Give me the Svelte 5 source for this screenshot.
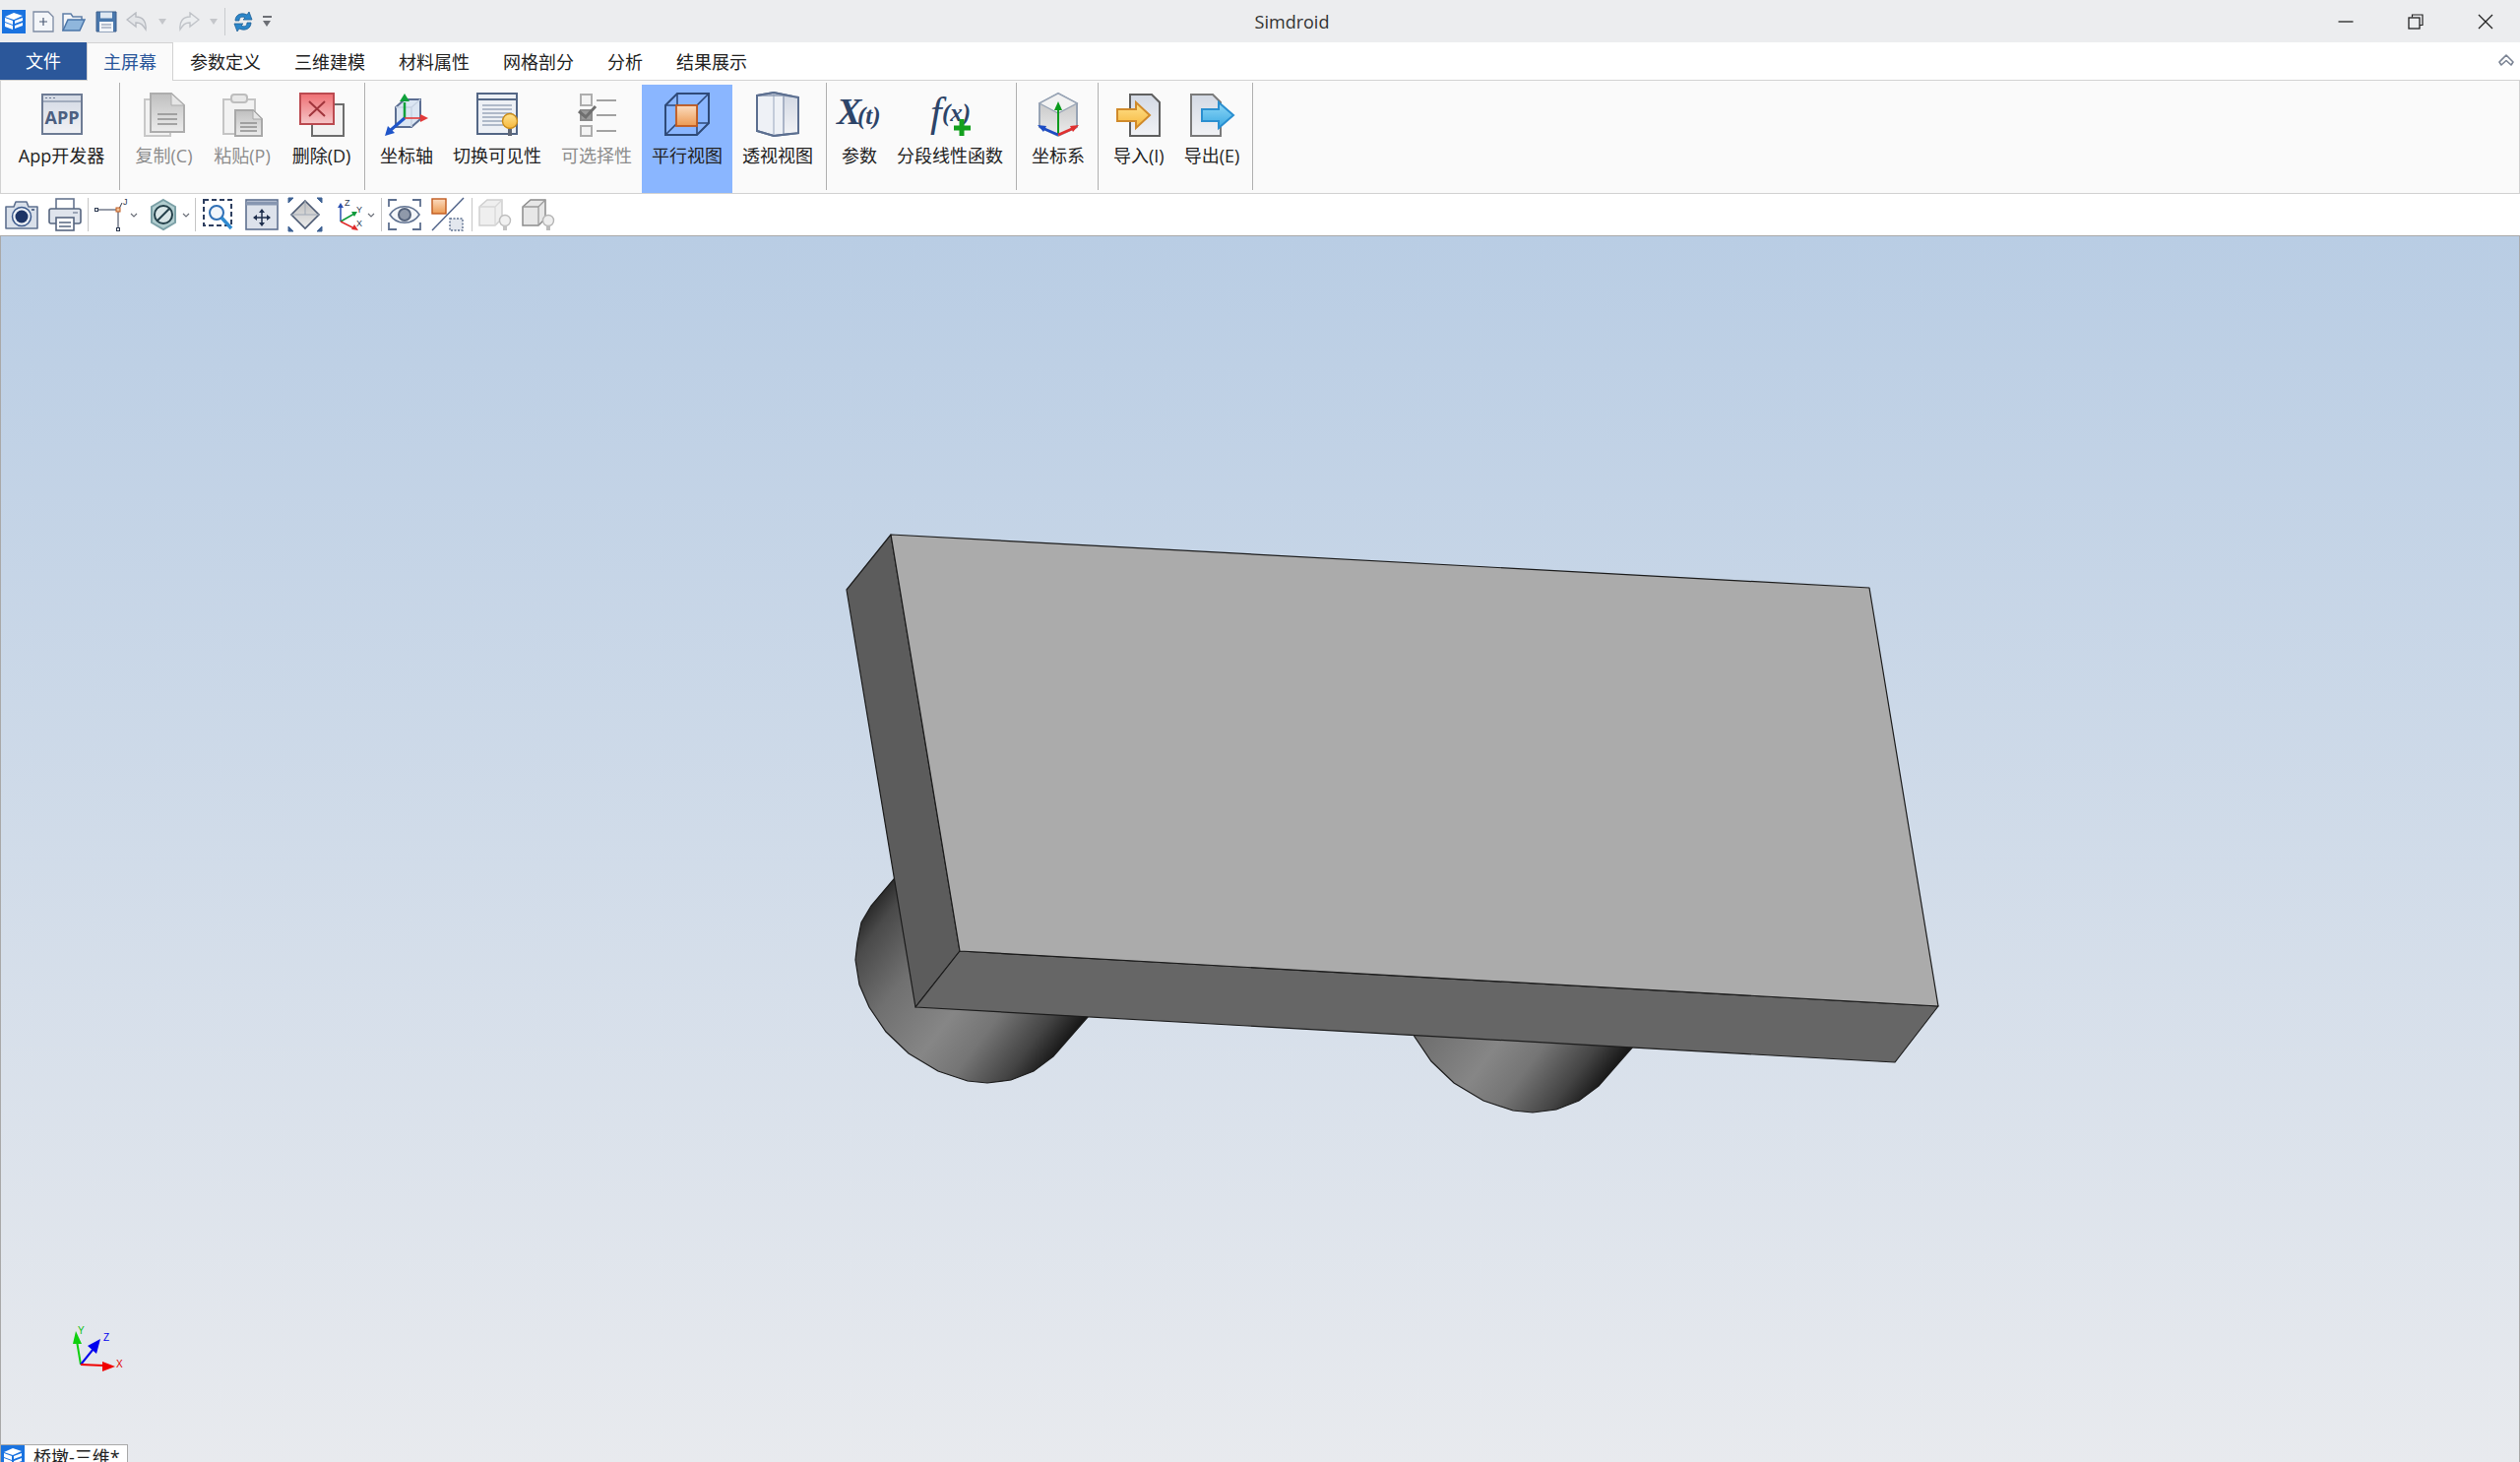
<script>
	const tabs = ['参数定义', '三维建模', '材料属性', '网格剖分', '分析', '结果展示'];

	const groups = [
		[{ label: 'App开发器', icon: 'app', w: 111 }],
		[
			{ label: '复制(C)', icon: 'copy', disabled: true, w: 79 },
			{ label: '粘贴(P)', icon: 'paste', disabled: true, w: 80 },
			{ label: '删除(D)', icon: 'delete', w: 81 }
		],
		[
			{ label: '坐标轴', icon: 'axes' },
			{ label: '切换可见性', icon: 'visible' },
			{ label: '可选择性', icon: 'select', disabled: true },
			{ label: '平行视图', icon: 'parallel', active: true },
			{ label: '透视视图', icon: 'perspective' }
		],
		[
			{ label: '参数', icon: 'param' },
			{ label: '分段线性函数', icon: 'func' }
		],
		[{ label: '坐标系', icon: 'csys' }],
		[
			{ label: '导入(I)', icon: 'import' },
			{ label: '导出(E)', icon: 'export' }
		]
	];

	const tools = [
		['camera', 'printer'],
		['edge+', 'hex+'],
		['zoombox', 'pan', 'fit', 'triad+'],
		['eye', 'slash'],
		['cubeLight', 'cubeDark']
	];

	const roundOutline =
		'M908 893 L885 920 L875 937 L871 957 L869 975 L873 1000 L883 1023 L900 1048 L923 1070 L953 1088 L983 1098 L1003 1100 L1027 1097 L1050 1088 L1070 1073 L1105 1033 Z';
</script>

{#snippet logo()}
	<rect width="24" height="24" fill="#1a73e0" />
	<path d="M3 7 L12 3 L21 6 L12 10Z M3 12 L11 15 V11 L3 8Z M13 11 L21 8 V11 L13 14Z M3 17 L11 20 V16 L3 13Z M13 16 L21 13 V16 L13 19Z" fill="#fff" />
{/snippet}

{#snippet ribbonIcon(name)}
	<svg class="ribbon-icon" viewBox="0 0 48 48" width="48" height="48">
		{#if name === 'app'}
			<rect x="4" y="4" width="40" height="40" fill="url(#gPanel)" stroke="#6d7b94" stroke-width="2" />
			<path d="M4 11 H44" stroke="#6d7b94" />
			<path d="M7 7.5 H9 M11 7.5 H13 M15 7.5 H17" stroke="#6d7b94" />
			<text x="24" y="34" text-anchor="middle" class="app-text">APP</text>
		{:else if name === 'copy'}
			<path d="M4 9 H30 V46 H4Z" fill="#f2f2f2" stroke="#c8c8c8" stroke-width="2" />
			<path d="M10 3 H31 L44 15 V42 H10Z" fill="url(#gGray)" stroke="#adadad" stroke-width="2" />
			<path d="M31 3 V15 H44Z" fill="#e6e6e6" stroke="#adadad" />
			<path d="M17 24 H37 M17 29 H37 M17 34 H37" stroke="#8f8f8f" stroke-width="1.6" />
		{:else if name === 'paste'}
			<path d="M5 9 H37 V44 H5Z" fill="#f2f2f2" stroke="#c4c4c4" stroke-width="2" />
			<rect x="13" y="4" width="16" height="8" rx="3" fill="#e8e8e8" stroke="#bdbdbd" stroke-width="2" />
			<path d="M17 20 H35 L44 29 V46 H17Z" fill="url(#gGray)" stroke="#a8a8a8" stroke-width="2" />
			<path d="M35 20 V29 H44Z" fill="#e6e6e6" stroke="#a8a8a8" />
			<path d="M22 33 H39 M22 37 H39 M22 41 H39" stroke="#8f8f8f" stroke-width="1.5" />
		{:else if name === 'delete'}
			<rect x="14" y="14" width="32" height="32" fill="#f2f2f2" stroke="#6d6d6d" stroke-width="2" />
			<rect x="2" y="3" width="34" height="31" fill="url(#gRed)" stroke="#bb4a50" stroke-width="2" />
			<path d="M11 11 L27 26 M27 11 L11 26" stroke="#a0353c" stroke-width="2" />
		{:else if name === 'axes'}
			<path d="M13 17 L22 9 H38 V29 L29 37 H13Z" fill="#dbe6f3" stroke="#5b6e92" stroke-width="2" />
			<path d="M13 17 H29 V37 M29 17 L38 9" fill="none" stroke="#c6d2e2" stroke-width="1.4" />
			<path d="M22 28 V12" stroke="#0fa13b" stroke-width="2.5" />
			<path d="M22 3 L27 11 H17Z" fill="#0fa13b" />
			<path d="M22 28 H38" stroke="#e33a3a" stroke-width="1.6" />
			<path d="M46 28 L38 24 V32Z" fill="#e33a3a" />
			<path d="M22 28 L8 40" stroke="#1f55c9" stroke-width="3" />
			<path d="M2 46 L5 36 L12 43Z" fill="#1f55c9" />
		{:else if name === 'visible'}
			<rect x="4" y="3" width="40" height="41" fill="#edf0f5" stroke="#536685" stroke-width="2" />
			<path d="M4 9 H44" stroke="#536685" stroke-width="2" />
			<path d="M9 15 H39 M9 19 H39 M9 23 H39 M9 27 H34 M9 31 H32 M9 35 H32" stroke="#9aa6ba" stroke-width="1.5" />
			<circle cx="37" cy="31" r="7.5" fill="url(#gBulb)" stroke="#c98b19" stroke-width="1.4" />
			<path d="M35 39 H39 V46 H35Z" fill="#5f6675" />
		{:else if name === 'select'}
			<rect x="8" y="4" width="11" height="11" fill="#f4f4f4" stroke="#adadad" stroke-width="2" />
			<rect x="8" y="20" width="11" height="10" fill="#9a9a9a" stroke="#8a8a8a" stroke-width="2" />
			<path d="M6 21 L13 27 L23 16" fill="none" stroke="#6f6f6f" stroke-width="3" />
			<rect x="8" y="36" width="11" height="10" fill="#f4f4f4" stroke="#adadad" stroke-width="2" />
			<path d="M24 10 H44 M24 25 H44 M24 41 H44" stroke="#a2a2a2" stroke-width="2" />
		{:else if name === 'parallel'}
			<path d="M2 15 L14 3 H46 V33 L34 45 H2Z" fill="none" stroke="#2f4a78" stroke-width="2" />
			<path d="M2 15 H34 V45 M34 15 L46 3 M14 3 V33 H46 M14 33 L2 45" fill="none" stroke="#2f4a78" stroke-width="1.6" />
			<rect x="13" y="15" width="21" height="21" fill="url(#gOrange)" stroke="#c05a1f" stroke-width="1.8" />
		{:else if name === 'perspective'}
			<path d="M3 5 L20 2 L45 7 V43 L20 46 L3 41Z" fill="#eef1f6" stroke="#5c6f90" stroke-width="2" />
			<path d="M20 2 V46" stroke="#b4bfd0" stroke-width="1.5" />
			<path d="M30 5 H45 V43 H30Z" fill="url(#gPanel)" />
			<path d="M3 5 H30 V44 M30 5 L45 7" fill="none" stroke="#8f9cb4" stroke-width="1.4" />
			<path d="M3 5 L20 2 L45 7 V43 L20 46 L3 41Z" fill="none" stroke="#5c6f90" stroke-width="2" />
		{:else if name === 'param'}
			<text x="1" y="34" class="math math-big">X</text>
			<text x="22" y="34" class="math math-small">(t)</text>
		{:else if name === 'func'}
			<text x="4" y="36" class="math math-f">f</text>
			<text x="16" y="31" class="math math-small">(x)</text>
			<path d="M36 29 V46 M28 38 H45" stroke="#13a01e" stroke-width="5" />
		{:else if name === 'csys'}
			<path d="M24 3 L43 13 V37 L24 46 L5 37 V13Z" fill="url(#gGray)" stroke="#97a3b4" stroke-width="2" />
			<path d="M5 13 L24 23 L43 13 L24 3Z" fill="#f2f2f2" stroke="#97a3b4" stroke-width="1.4" />
			<path d="M24 44 V17" stroke="#0a9a1c" stroke-width="2" />
			<path d="M24 11 L28 20 H20Z" fill="#0a9a1c" />
			<path d="M24 45 L8 38" stroke="#1d4cc4" stroke-width="2.5" />
			<path d="M3 35 L12 36 L9 42Z" fill="#1d4cc4" />
			<path d="M24 45 L40 38" stroke="#e03030" stroke-width="2.5" />
			<path d="M45 35 L36 36 L39 42Z" fill="#e03030" />
		{:else if name === 'import'}
			<path d="M15 4 H37 L45 12 V46 H15Z" fill="url(#gPanel)" stroke="#5f5f5f" stroke-width="2" />
			<path d="M2 19 H21 V12 L35 25 L21 38 V31 H2Z" fill="url(#gBulb)" stroke="#d08a2a" stroke-width="2" />
		{:else if name === 'export'}
			<path d="M3 4 H25 L33 12 V46 H3Z" fill="url(#gPanel)" stroke="#7a7a7a" stroke-width="2" />
			<path d="M14 19 H31 V12 L46 25 L31 38 V31 H14Z" fill="url(#gBlue)" stroke="#2a8fd0" stroke-width="2" />
		{/if}
	</svg>
{/snippet}

{#snippet toolIcon(name)}
	<svg class="tool-icon" viewBox="0 0 34 34" width="34" height="34">
		{#if name === 'camera'}
			<path d="M1 9 H9 L11 4 H22 L24 9 H33 V31 H1Z" fill="#d9e0ea" stroke="#5f7190" stroke-width="1.6" stroke-linejoin="round" />
			<circle cx="17" cy="19" r="9.5" fill="#eef2f7" stroke="#3c5a8c" stroke-width="1.5" />
			<circle cx="17" cy="19" r="6.5" fill="#1e3566" />
			<rect x="27" y="11" width="3" height="2" fill="#5f7190" />
		{:else if name === 'printer'}
			<rect x="8" y="1" width="18" height="11" fill="#fff" stroke="#66758f" stroke-width="1.6" />
			<rect x="1" y="11" width="32" height="15" rx="2" fill="#dfe4ec" stroke="#56657f" stroke-width="1.6" />
			<rect x="8" y="20" width="18" height="13" fill="#fff" stroke="#56657f" stroke-width="1.6" />
			<path d="M11 25 H23 M11 29 H23" stroke="#56657f" stroke-width="1.6" />
			<path d="M25 15 H30" stroke="#56657f" />
		{:else if name === 'edge'}
			<path d="M3 12 H24 M24 14 V31 M25 11 L28 5" stroke="#2c3950" stroke-width="1" fill="none" />
			<rect x="0.5" y="10.5" width="3" height="3" fill="#fff" stroke="#2c3950" />
			<rect x="22" y="10" width="4" height="4" fill="#f2c49a" stroke="#c05a1f" />
			<rect x="22.5" y="30.5" width="3" height="3" fill="#fff" stroke="#2c3950" />
			<text x="29" y="7" class="tiny">J</text>
		{:else if name === 'hex'}
			<path d="M17 2 L29 9 V25 L17 32 L5 25 V9Z" fill="#b2ced0" stroke="#7ba0a6" stroke-width="2" />
			<circle cx="17" cy="17" r="9" fill="#d9e6e7" stroke="#24404a" stroke-width="2" />
			<path d="M11 23 L23 11" stroke="#24404a" stroke-width="2" />
		{:else if name === 'zoombox'}
			<rect x="2" y="2" width="28" height="26" fill="none" stroke="#2e3f60" stroke-width="2" stroke-dasharray="5 3" />
			<circle cx="15" cy="15" r="7" fill="#f1f5fa" stroke="#2f6fb5" stroke-width="2" />
			<path d="M20 20 L30 31" stroke="#2f8ad0" stroke-width="3.5" />
		{:else if name === 'pan'}
			<rect x="1" y="2" width="32" height="30" fill="#dde2eb" stroke="#5f7190" stroke-width="1.6" />
			<path d="M1 5.5 H33" stroke="#8796b0" stroke-width="4" />
			<path d="M17 12 V28 M9 20 H25" stroke="#1f2f4d" stroke-width="1.5" />
			<path d="M17 11 L20 15 H14Z M17 29 L20 25 H14Z M8 20 L12 17 V23Z M26 20 L22 17 V23Z" fill="#1f2f4d" />
		{:else if name === 'fit'}
			<path d="M17 3 L31 17 L17 31 L3 17Z" fill="url(#gGray)" stroke="#4c5a73" stroke-width="1.6" />
			<path d="M3 17 H31 M17 3 L17 17" stroke="#9fa8b5" />
			<path d="M0 0 H5 L0 5Z M34 0 H29 L34 5Z M0 34 H5 L0 29Z M34 34 H29 L34 29Z" fill="#3e6294" stroke="#3e6294" />
		{:else if name === 'triad'}
			<path d="M9 24 V9" stroke="#2a4fb0" stroke-width="1.5" />
			<path d="M9 5 L12 10 H6Z" fill="#2a4fb0" />
			<path d="M9 24 L23 16" stroke="#0d9a3a" stroke-width="1.5" />
			<path d="M26 14 L20 14 L23 19Z" fill="#0d9a3a" />
			<path d="M9 24 L23 31" stroke="#e02a2a" stroke-width="1.5" />
			<path d="M27 33 L20 32 L23 27Z" fill="#e02a2a" />
			<text x="13" y="8" class="tiny">Z</text>
			<text x="25" y="15" class="tiny">Y</text>
			<text x="25" y="29" class="tiny">X</text>
		{:else if name === 'eye'}
			<path d="M1 9 V2 H9 M25 2 H33 V9 M1 25 V32 H9 M25 32 H33 V25" fill="none" stroke="#5f7190" stroke-width="1.8" />
			<path d="M2 17 C9 6 25 6 32 17 C25 28 9 28 2 17Z" fill="#f4f6f9" stroke="#5f7190" stroke-width="1.6" />
			<circle cx="17" cy="17" r="6" fill="#8f99aa" stroke="#55637c" stroke-width="2" />
		{:else if name === 'slash'}
			<rect x="1" y="1" width="14" height="15" fill="url(#gOrange)" stroke="#c05a1f" stroke-width="1.4" />
			<rect x="19" y="21" width="13" height="12" fill="#e3e7ee" stroke="#5f7190" stroke-dasharray="2 1.5" stroke-width="1.4" />
			<path d="M1 33 L33 0" stroke="#4e6188" stroke-width="1.4" />
		{:else if name === 'cubeLight'}
			<path d="M1 9 L9 2 H24 V21 L17 28 H1Z" fill="#efefef" stroke="#cfcfcf" stroke-width="1.5" />
			<path d="M1 9 H17 V28 M17 9 L24 2" fill="none" stroke="#d8d8d8" stroke-width="1.3" />
			<circle cx="27" cy="23" r="5.5" fill="#f1f1f1" stroke="#bdbdbd" stroke-width="1.4" />
			<path d="M25 28 H29 V33 H25Z" fill="#c4c4c4" />
		{:else if name === 'cubeDark'}
			<path d="M1 9 L9 2 H24 V21 L17 28 H1Z" fill="#e7e7e7" stroke="#8c8c8c" stroke-width="1.5" />
			<path d="M1 9 H17 V28 M17 9 L24 2" fill="none" stroke="#9a9a9a" stroke-width="1.3" />
			<circle cx="27" cy="23" r="5.5" fill="#eeeeee" stroke="#b5b5b5" stroke-width="1.4" />
			<path d="M25 28 H29 V33 H25Z" fill="#bcbcbc" />
		{/if}
	</svg>
{/snippet}

<svg class="defs" width="0" height="0" aria-hidden="true">
	<defs>
		<linearGradient id="gPanel" x1="0" y1="0" x2="0" y2="1">
			<stop offset="0" stop-color="#d3d9e4" />
			<stop offset="1" stop-color="#f1f2f5" />
		</linearGradient>
		<linearGradient id="gGray" x1="0" y1="0" x2="0" y2="1">
			<stop offset="0" stop-color="#bfbfbf" />
			<stop offset="1" stop-color="#ececec" />
		</linearGradient>
		<linearGradient id="gRed" x1="0" y1="0" x2="0" y2="1">
			<stop offset="0" stop-color="#ef6f73" />
			<stop offset="1" stop-color="#f5c6c8" />
		</linearGradient>
		<linearGradient id="gBulb" x1="0" y1="0" x2="0" y2="1">
			<stop offset="0" stop-color="#ffe38f" />
			<stop offset="1" stop-color="#f6b73c" />
		</linearGradient>
		<linearGradient id="gOrange" x1="0" y1="0" x2="0" y2="1">
			<stop offset="0" stop-color="#fbdcc0" />
			<stop offset="1" stop-color="#ec9a52" />
		</linearGradient>
		<linearGradient id="gBlue" x1="0" y1="0" x2="0" y2="1">
			<stop offset="0" stop-color="#8fd8f7" />
			<stop offset="1" stop-color="#3aa8e2" />
		</linearGradient>
		<linearGradient id="cyl1" gradientUnits="userSpaceOnUse" x1="885" y1="905" x2="1090" y2="1060">
			<stop offset="0" stop-color="#1c1c1c" />
			<stop offset="0.11" stop-color="#4a4a4a" />
			<stop offset="0.31" stop-color="#707070" />
			<stop offset="0.55" stop-color="#868686" />
			<stop offset="0.7" stop-color="#757575" />
			<stop offset="0.87" stop-color="#444444" />
			<stop offset="1" stop-color="#0e0e0e" />
		</linearGradient>
	</defs>
</svg>

<div class="app">
	<header class="titlebar">
		<div class="qat">
			<svg class="qat-logo" viewBox="0 0 24 24" width="24" height="24">{@render logo()}</svg>
			<svg class="qat-new" viewBox="0 0 22 22" width="22" height="22">
				<path d="M1 1 H16 L21 6 V21 H1Z" fill="#f4f6f9" stroke="#7c8aa3" stroke-width="1.3" />
				<path d="M11 7 V15 M7 11 H15" stroke="#4b5a75" stroke-width="1.2" />
			</svg>
			<svg class="qat-open" viewBox="0 0 24 22" width="24" height="22">
				<path d="M1 20 V3 H9 L11 6 H20 V10" fill="#f4f6f9" stroke="#5f7fa8" stroke-width="1.5" />
				<path d="M1 20 L6 9 H23 L18 20Z" fill="#8fb6dc" stroke="#4a75a8" stroke-width="1.5" />
			</svg>
			<svg class="qat-save" viewBox="0 0 22 22" width="22" height="22">
				<path d="M1 1 H21 V21 H1Z" fill="#4a78ad" stroke="#3d5f8c" />
				<rect x="5" y="1.5" width="12" height="6" fill="#dfe8f2" />
				<rect x="4" y="11" width="14" height="10" fill="#f2f5f9" />
				<path d="M6 14 H16 M6 17 H16" stroke="#7c8aa3" />
			</svg>
			<svg class="qat-undo" viewBox="0 0 22 20" width="22" height="20">
				<path d="M1 8 L10 1 V5 C17 5 21 10 20 18 C17 13 15 11 10 11 V15Z" fill="#e3e5e8" stroke="#b9bcc2" stroke-width="1.4" />
			</svg>
			<span class="qat-drop first"></span>
			<svg class="qat-redo" viewBox="0 0 22 20" width="22" height="20">
				<path d="M21 8 L12 1 V5 C5 5 1 10 2 18 C5 13 7 11 12 11 V15Z" fill="#eceef0" stroke="#c0c3c8" stroke-width="1.4" />
			</svg>
			<span class="qat-drop"></span>
			<i class="qat-sep"></i>
			<svg class="qat-sync" viewBox="0 0 20 24" width="20" height="24">
				<path d="M2 11 C2 5 8 2 14 5 L16 2 L19 10 L10 10 L12 8 C8 6 6 8 6 11Z" fill="#2b86c9" stroke="#1f5f96" stroke-width="0.8" />
				<path d="M18 13 C18 19 12 22 6 19 L4 22 L1 14 L10 14 L8 16 C12 18 14 16 14 13Z" fill="#2b86c9" stroke="#1f5f96" stroke-width="0.8" />
			</svg>
			<span class="qat-more"></span>
		</div>
		<div class="title">Simdroid</div>
		<div class="win-controls">
			<svg viewBox="0 0 16 16" width="16" height="16"><path d="M0.5 8 H15.5" stroke="#222" stroke-width="1.3" /></svg>
			<svg viewBox="0 0 16 16" width="16" height="16">
				<path d="M4.5 3.5 V1 H15 V11.5 H12" fill="none" stroke="#222" stroke-width="1.2" />
				<rect x="1" y="4" width="11" height="11" fill="none" stroke="#222" stroke-width="1.3" />
			</svg>
			<svg viewBox="0 0 16 16" width="16" height="16"><path d="M1 1 L15 15 M15 1 L1 15" stroke="#222" stroke-width="1.3" /></svg>
		</div>
	</header>

	<nav class="tabs">
		<div class="file-tab">文件</div>
		<div class="tab current">主屏幕</div>
		{#each tabs as tab}
			<div class="tab">{tab}</div>
		{/each}
		<svg class="collapse" viewBox="0 0 16 14" width="16" height="14">
			<path d="M1 9 L8 2 L15 9 L13 12 L8 7.5 L3 12Z" fill="#fff" stroke="#7b8494" stroke-width="1.6" stroke-linejoin="round" />
		</svg>
	</nav>

	<section class="ribbon">
		{#each groups as group}
			<div class="group">
				{#each group as item}
					<button
						class="rb-btn"
						class:disabled={item.disabled}
						class:active={item.active}
						style:width={item.w ? `${item.w}px` : null}
					>
						{@render ribbonIcon(item.icon)}
						<span class="rb-label">{item.label}</span>
					</button>
				{/each}
			</div>
			<i class="rb-sep"></i>
		{/each}
	</section>

	<section class="toolbar">
		{#each tools as set, i}
			{#if i > 0}<i class="tb-sep" class:late={i >= 3}></i>{/if}
			{#each set as tool}
				<span class="tool">
					{@render toolIcon(tool.replace('+', ''))}
					{#if tool.endsWith('+')}
						<svg class="chev" viewBox="0 0 8 5" width="8" height="5"><path d="M1 1 L4 4 L7 1" fill="none" stroke="#6a6f78" stroke-width="1.2" /></svg>
					{/if}
				</span>
			{/each}
		{/each}
	</section>

	<main class="viewport">
		<svg class="scene" viewBox="1 240 2558 1245" width="2558" height="1245">
			<path d={roundOutline} fill="url(#cyl1)" stroke="#1c1c1c" stroke-width="1.2" />
			<g transform="translate(554 30)">
				<path d={roundOutline} fill="url(#cyl1)" stroke="#1c1c1c" stroke-width="1.2" />
			</g>
			<g stroke="#1c1c1c" stroke-width="1.2" stroke-linejoin="round">
				<polygon points="905,543 860,599 930,1023 975,966" fill="#5c5c5c" />
				<polygon points="975,966 930,1023 1925,1079 1969,1022" fill="#666666" />
				<polygon points="905,543 1899,597 1969,1022 975,966" fill="#ababab" />
			</g>

			<g class="triad">
				<path d="M82 1386 L78 1362" stroke="#0fd00f" stroke-width="2" />
				<path d="M77 1352 L83 1365 L74 1365Z" fill="#0fd00f" />
				<path d="M82 1386 L95 1370" stroke="#0000ee" stroke-width="2" />
				<path d="M102 1360 L98 1375 L89 1367Z" fill="#0000ee" />
				<path d="M82 1386 L105 1387" stroke="#f00000" stroke-width="2" />
				<path d="M117 1388 L104 1393 L104 1383Z" fill="#f00000" />
				<text x="79" y="1355" class="axis-label" fill="#0fc00f">Y</text>
				<text x="105" y="1362" class="axis-label" fill="#0000ee">Z</text>
				<text x="118" y="1389" class="axis-label" fill="#e00000">X</text>
			</g>
		</svg>

		<div class="doc-tab">
			<svg viewBox="0 0 24 24" width="24" height="24">{@render logo()}</svg>
			<span>桥墩-三维*</span>
		</div>
	</main>
</div>

<style>
	:global(body) {
		margin: 0;
		overflow: hidden;
	}

	.defs {
		position: absolute;
		width: 0;
		height: 0;
	}

	.app {
		width: 2560px;
		height: 1485px;
		display: flex;
		flex-direction: column;
		overflow: hidden;
		background: #fff;
		color: #222;
		font-family: "Open Sans", "Noto Sans CJK SC", sans-serif;
		font-size: 18px;
	}

	.titlebar {
		height: 43px;
		flex-shrink: 0;
		display: flex;
		align-items: center;
		background: #ecedef;
	}

	.qat {
		width: 290px;
		display: flex;
		align-items: center;
		padding-left: 2px;
		box-sizing: border-box;
	}

	.qat-new { margin-left: 7px; }
	.qat-open { margin-left: 8px; }
	.qat-save { margin-left: 10px; }
	.qat-undo { margin-left: 9px; }
	.qat-redo { margin-left: 12px; }

	.qat-drop {
		margin-left: 10px;
		border: 4.5px solid transparent;
		border-top: 6px solid #c4c6ca;
		border-bottom: 0;
	}

	.qat-drop.first {
		margin-left: 11px;
	}

	.qat-sep {
		width: 1px;
		height: 28px;
		margin-left: 7px;
		background: #c9cbce;
	}

	.qat-sync { margin-left: 8px; }

	.qat-more {
		margin-left: 10px;
		width: 9px;
		height: 11px;
		box-sizing: border-box;
		border-top: 2px solid #6c6f75;
		position: relative;
	}

	.qat-more::after {
		content: '';
		position: absolute;
		left: 0;
		top: 3px;
		border: 4.5px solid transparent;
		border-top: 6px solid #6c6f75;
		border-bottom: 0;
	}

	.title {
		flex: 1;
		text-align: center;
		color: #333;
	}

	.win-controls {
		width: 225px;
		display: flex;
		justify-content: flex-end;
		gap: 55px;
		padding-right: 27px;
		box-sizing: border-box;
	}

	.tabs {
		height: 38px;
		flex-shrink: 0;
		display: flex;
		align-items: stretch;
		position: relative;
	}

	.file-tab {
		width: 88px;
		display: flex;
		align-items: center;
		justify-content: center;
		background: #2b579a;
		color: #fff;
		padding-bottom: 2px;
		box-sizing: border-box;
	}

	.tab {
		padding: 0 17px 2px;
		display: flex;
		align-items: center;
		border: 1px solid transparent;
		border-bottom: 0;
		margin: 0 -1px;
	}

	.tab.current {
		color: #2b579a;
		background: #fafafa;
		border-color: #d2d2d2;
		margin: 0;
		padding: 0 16px 2px;
		position: relative;
		z-index: 1;
		margin-bottom: -1px;
	}

	.collapse {
		position: absolute;
		right: 6px;
		top: 11px;
	}

	.ribbon {
		height: 116px;
		flex-shrink: 0;
		box-sizing: border-box;
		display: flex;
		padding: 4px 0 0 6px;
		background: #fafafa;
		border: 1px solid #d2d2d2;
	}

	.group {
		display: flex;
	}

	.rb-btn {
		display: flex;
		flex-direction: column;
		align-items: center;
		height: 110px;
		padding: 6px 10px 0;
		box-sizing: border-box;
		border: 0;
		background: none;
		font: inherit;
		color: #222;
		white-space: nowrap;
	}

	.rb-btn.disabled {
		color: #8c8c8c;
	}

	.rb-btn.active {
		background: #8ab6ff;
	}

	/* icons may overhang a short label, the label sets the button width */
	.ribbon-icon {
		display: block;
		flex-shrink: 0;
		margin: 0 -8px;
		overflow: visible;
	}

	.rb-label {
		margin-top: 6px;
		line-height: 24px;
	}

	.rb-sep {
		width: 1px;
		margin: -2px 5px 3px 3px;
		background: #b0b0b0;
	}

	.toolbar {
		height: 42px;
		flex-shrink: 0;
		display: flex;
		align-items: center;
	}

	.tool {
		width: 44px;
		display: flex;
		align-items: center;
		justify-content: center;
		position: relative;
		flex-shrink: 0;
	}

	.tool:has(.chev) {
		margin-right: 9px;
	}

	.tool-icon {
		overflow: visible;
	}

	.chev {
		position: absolute;
		left: 41px;
		top: 15px;
	}

	.tb-sep {
		width: 1px;
		height: 34px;
		margin: 0 1px;
		background: #c6c6c6;
	}

	.tb-sep.late {
		margin-left: 2px;
	}

	.viewport {
		flex: 1;
		min-height: 0;
		position: relative;
		border: solid #a9a9a9;
		border-width: 1px 1px 0;
		background: linear-gradient(#b9cde4, #e8eaee);
	}

	.scene {
		display: block;
	}

	.axis-label {
		font-family: "Liberation Sans", sans-serif;
		font-size: 10px;
	}

	.doc-tab {
		position: absolute;
		left: 0;
		bottom: 0;
		width: 128px;
		height: 17px;
		display: flex;
		overflow: hidden;
		background: #fff;
		border: solid #a9a9a9;
		border-width: 1px 1px 0 0;
	}

	.doc-tab span {
		margin-left: 9px;
		line-height: 24px;
		white-space: nowrap;
	}

	.app-text {
		font-family: "Open Sans", sans-serif;
		font-weight: 700;
		font-size: 18px;
		fill: #4c5f80;
	}

	.math {
		font-family: "Liberation Serif", serif;
		font-style: italic;
		fill: #2d4468;
	}

	.math-big {
		font-size: 38px;
		font-weight: 700;
	}

	.math-small {
		font-size: 25px;
		font-weight: 700;
	}

	.math-f {
		font-size: 42px;
	}

	.tiny {
		font-family: "Liberation Sans", sans-serif;
		font-size: 9px;
		fill: #2c3950;
	}
</style>
